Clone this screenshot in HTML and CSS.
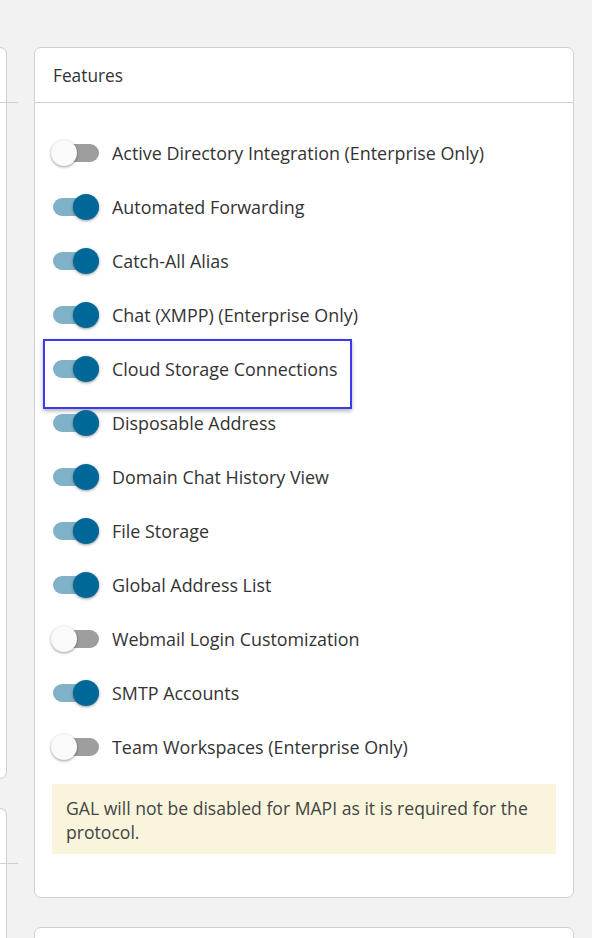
FILE: index.html
```html
<!DOCTYPE html>
<html>
<head>
<meta charset="utf-8">
<link rel="stylesheet" href="styles.css">
</head>
<body>
<div class="page">
  <div class="col side">
    <div class="card side-card tall"><div class="card-head"></div></div>
    <div class="card side-card"><div class="card-head"></div></div>
  </div>
  <div class="col main">
    <div class="card feat">
      <div class="card-head"><span class="title">Features</span></div>
      <div class="card-body">
        <ul class="list">
          <li class="row"><span class="toggle"></span><span class="label">Active Directory Integration (Enterprise Only)</span></li>
          <li class="row"><span class="toggle on"></span><span class="label">Automated Forwarding</span></li>
          <li class="row"><span class="toggle on"></span><span class="label">Catch-All Alias</span></li>
          <li class="row"><span class="toggle on"></span><span class="label">Chat (XMPP) (Enterprise Only)</span></li>
          <li class="row focused"><span class="toggle on"></span><span class="label">Cloud Storage Connections</span></li>
          <li class="row"><span class="toggle on"></span><span class="label">Disposable Address</span></li>
          <li class="row"><span class="toggle on"></span><span class="label">Domain Chat History View</span></li>
          <li class="row"><span class="toggle on"></span><span class="label">File Storage</span></li>
          <li class="row"><span class="toggle on"></span><span class="label">Global Address List</span></li>
          <li class="row"><span class="toggle"></span><span class="label">Webmail Login Customization</span></li>
          <li class="row"><span class="toggle on"></span><span class="label">SMTP Accounts</span></li>
          <li class="row"><span class="toggle"></span><span class="label">Team Workspaces (Enterprise Only)</span></li>
        </ul>
        <div class="note">GAL will not be disabled for MAPI as it is required for the protocol.</div>
      </div>
    </div>
    <div class="card next"></div>
  </div>
</div>
</body>
</html>
```
FILE: styles.css
```css
html, body {
  margin: 0;
  padding: 0;
  background: #f2f2f2;
  font-family: "Open Sans", "Noto Sans", sans-serif;
  color: #333;
}
.page {
  display: grid;
  grid-template-columns: 7px 540px;
  column-gap: 27px;
  padding-top: 47px;
  height: 938px;
  box-sizing: border-box;
  overflow: hidden;
}
.col {
  display: flex;
  flex-direction: column;
  gap: 29px;
}
.card {
  background: #fff;
  border: 1px solid #d0d0d0;
  border-radius: 7px;
  box-sizing: border-box;
}
.side-card {
  border-left: none;
  border-top-left-radius: 0;
  border-bottom-left-radius: 0;
  height: 300px;
}
.side-card.tall {
  height: 732px;
  flex: none;
}
.card-head {
  height: 55px;
  border-bottom: 1px solid #d0d0d0;
  box-sizing: border-box;
  display: flex;
  align-items: center;
  padding-left: 18px;
}
.title {
  font-size: 17.3px;
  color: #333;
}
.feat {
  height: 851px;
  flex: none;
}
.card-body {
  padding: 23px 16px 0 16px;
}
.list {
  list-style: none;
  margin: 0;
  padding: 0;
}
.row {
  height: 54px;
  display: flex;
  align-items: center;
  position: relative;
}
.toggle {
  position: relative;
  width: 48px;
  height: 26px;
  flex: none;
  margin-right: 13px;
}
.toggle::before {
  content: "";
  position: absolute;
  left: 2px;
  top: 4px;
  width: 46px;
  height: 18px;
  border-radius: 9px;
  background: #9e9e9e;
}
.toggle::after {
  content: "";
  position: absolute;
  left: 0;
  top: 0;
  width: 26px;
  height: 26px;
  border-radius: 50%;
  background: #fafafa;
  box-shadow: 0 1px 3px rgba(0,0,0,0.4);
}
.toggle.on::before {
  background: #7fb2c9;
}
.toggle.on::after {
  left: 22px;
  background: #006899;
}
.label {
  font-size: 17.9px;
  color: #333;
}
.focused::after {
  content: "";
  position: absolute;
  left: -8px;
  top: -3px;
  width: 309px;
  height: 70px;
  box-sizing: border-box;
  border: 2px solid #3a3af2;
  box-shadow: 0 2px 4px rgba(0,0,0,0.3);
  pointer-events: none;
}
.note {
  margin: 10px 1px 0 1px;
  background: #f9f5dd;
  padding: 12px 14px 10px 14px;
  font-size: 17.6px;
  line-height: 24px;
  color: #444;
}
.next {
  height: 40px;
  flex: none;
}
```
